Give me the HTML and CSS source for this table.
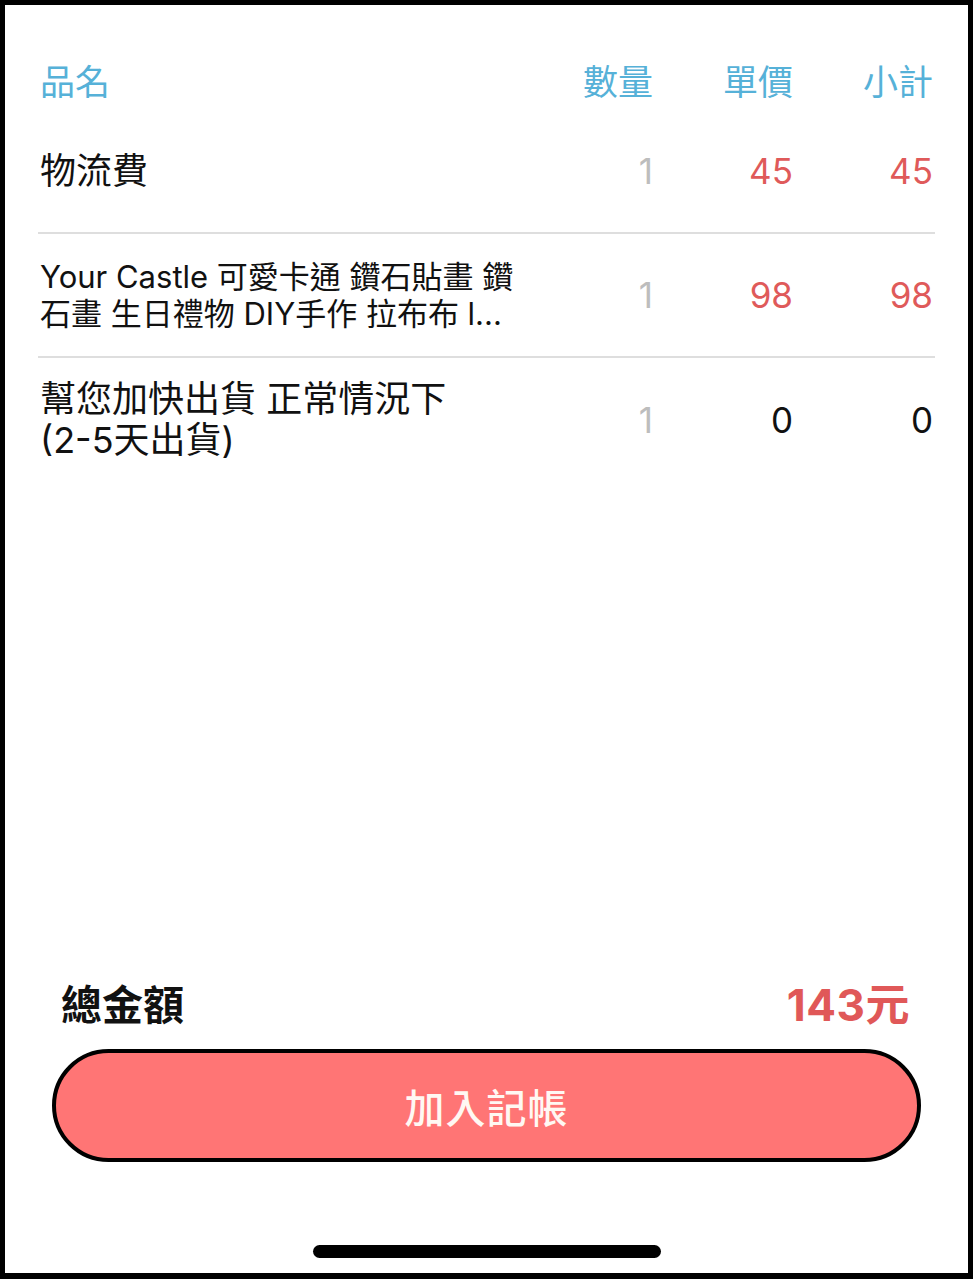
FILE: index.html
```html
<!DOCTYPE html>
<html lang="zh-Hant">
<head>
    <meta charset="UTF-8">
    <meta name="viewport" content="width=device-width, initial-scale=1.0">
    <title>記帳明細</title>
    <link rel="stylesheet" href="styles.css">
</head>
<body>
    <div class="phone">
        <div class="items">
            <div class="row head">
                <div class="name">品名</div>
                <div class="num">數量</div>
                <div class="num">單價</div>
                <div class="num">小計</div>
            </div>

            <div class="row item">
                <div class="name">物流費</div>
                <div class="num qty">1</div>
                <div class="num price">45</div>
                <div class="num price">45</div>
            </div>

            <div class="row item">
                <div class="name small">Your Castle 可愛卡通 鑽石貼畫 鑽<br>石畫 生日禮物 DIY手作 拉布布 l...</div>
                <div class="num qty">1</div>
                <div class="num price">98</div>
                <div class="num price">98</div>
            </div>

            <div class="row item">
                <div class="name">幫您加快出貨 正常情況下<br>(2-5天出貨)</div>
                <div class="num qty">1</div>
                <div class="num zero">0</div>
                <div class="num zero">0</div>
            </div>
        </div>

        <div class="spacer"></div>

        <div class="total">
            <span class="total-label">總金額</span>
            <span class="total-value">143元</span>
        </div>

        <button class="add-btn">加入記帳</button>

        <div class="home-bar"></div>
    </div>
</body>
</html>
```

FILE: styles.css
```css
body {
    margin: 0;
    background: #000;
    font-family: Inter, "Noto Sans CJK TC", sans-serif;
}

.phone {
    box-sizing: border-box;
    height: 1279px;
    border: 5px solid #000;
    border-bottom-width: 6px;
    background: #fff;
    display: flex;
    flex-direction: column;
}

.items {
    padding: 49px 33px 0 33px;
}

.row {
    display: grid;
    grid-template-columns: 1fr 140px 140px 140px;
    align-items: center;
    font-size: 35px;
    line-height: 41px;
}

.row .name {
    padding-left: 2px;
    color: #111;
}

.item .name {
    font-size: 36px;
}

.row .num {
    text-align: right;
    padding-right: 2px;
}

.head {
    height: 56px;
    color: #56b1d8;
}

.head .name {
    color: #56b1d8;
}

.item {
    height: 124px;
    box-sizing: border-box;
    border-bottom: 2px solid #dedede;
}

.item:last-child {
    border-bottom: none;
}

.item .name.small {
    font-size: 31px;
    line-height: 37px;
    white-space: nowrap;
}

.qty {
    color: #bdbdbd;
}

.price {
    color: #df5a5a;
}

.zero {
    color: #111;
}

.spacer {
    flex: 1;
}

.total {
    display: flex;
    justify-content: space-between;
    align-items: center;
    padding: 0 58px 0 56px;
    height: 48px;
    margin-bottom: 23px;
    font-size: 41px;
    font-weight: 700;
}

.total-label {
    color: #111;
}

.total-value {
    color: #e05858;
    font-size: 44px;
    letter-spacing: 0.5px;
}

.add-btn {
    margin: 0 47px;
    height: 113px;
    border: 4px solid #000;
    border-radius: 60px;
    background: #ff7575;
    color: #fff8f3;
    font-family: inherit;
    font-size: 40px;
    font-weight: 500;
    letter-spacing: 1px;
}

.home-bar {
    align-self: center;
    width: 348px;
    height: 13px;
    border-radius: 7px;
    background: #000;
    margin: 83px 0 15px 0;
}
```
